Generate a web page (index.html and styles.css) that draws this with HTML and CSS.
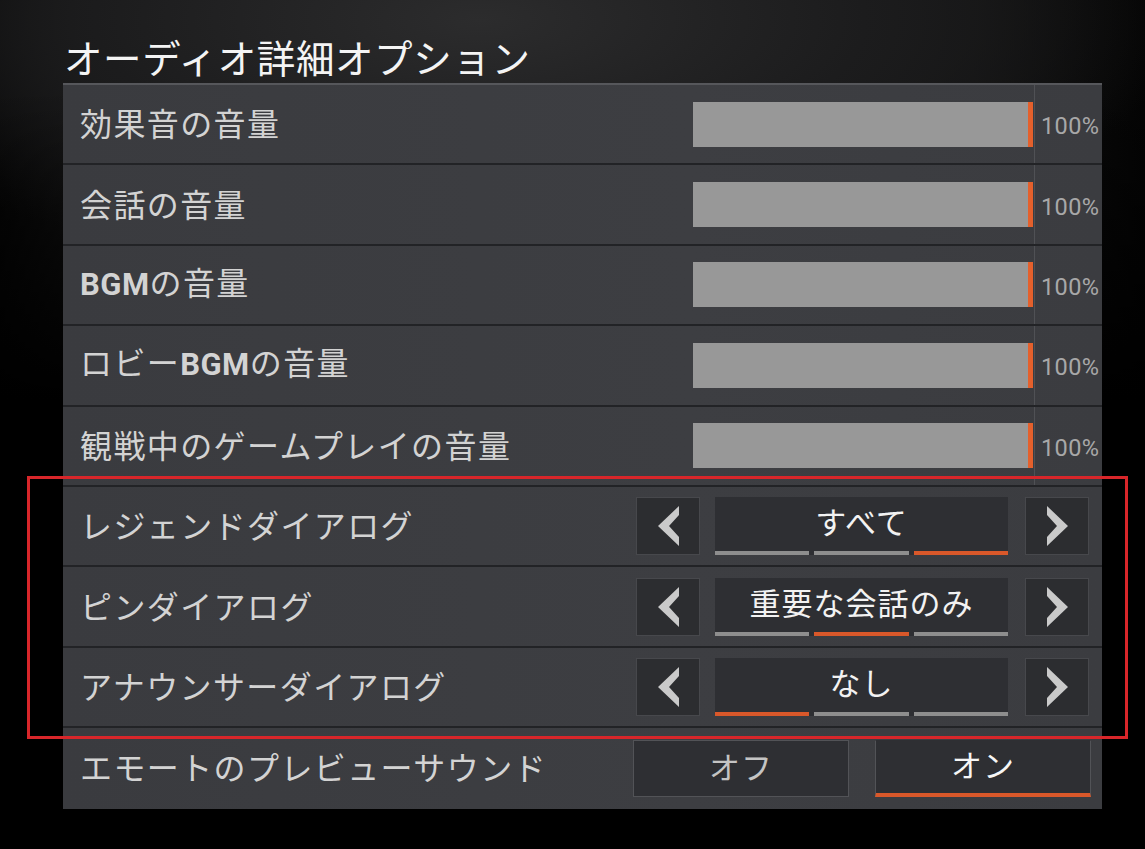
FILE: index.html
```html
<!DOCTYPE html>
<html lang="ja">
<head>
<meta charset="utf-8">
<title>オーディオ詳細オプション</title>
<link rel="stylesheet" href="styles.css">
</head>
<body>
<div class="page">
  <h1 class="title">オーディオ詳細オプション</h1>
  <div class="panel">
    <div class="row">
      <div class="label">効果音の音量</div>
      <div class="slider">
        <div class="track"><div class="fill"></div></div>
        <div class="vline"></div>
        <div class="pct">100%</div>
      </div>
    </div>
    <div class="row">
      <div class="label">会話の音量</div>
      <div class="slider">
        <div class="track"><div class="fill"></div></div>
        <div class="vline"></div>
        <div class="pct">100%</div>
      </div>
    </div>
    <div class="row">
      <div class="label"><span class="latin">BGM</span>の音量</div>
      <div class="slider">
        <div class="track"><div class="fill"></div></div>
        <div class="vline"></div>
        <div class="pct">100%</div>
      </div>
    </div>
    <div class="row">
      <div class="label">ロビー<span class="latin">BGM</span>の音量</div>
      <div class="slider">
        <div class="track"><div class="fill"></div></div>
        <div class="vline"></div>
        <div class="pct">100%</div>
      </div>
    </div>
    <div class="row">
      <div class="label">観戦中のゲームプレイの音量</div>
      <div class="slider">
        <div class="track"><div class="fill"></div></div>
        <div class="vline"></div>
        <div class="pct">100%</div>
      </div>
    </div>
    <div class="row">
      <div class="label">レジェンドダイアログ</div>
      <div class="selector">
        <div class="arrow"><svg width="21" height="40" viewBox="0 0 21 40"><polygon points="21,0 0,20 21,40 21,31 11,20 21,9"/></svg></div>
        <div class="value">
          <span class="value-text">すべて</span>
          <div class="segs"><i></i><i></i><i class="on"></i></div>
        </div>
        <div class="arrow"><svg width="21" height="40" viewBox="0 0 21 40"><polygon points="0,0 21,20 0,40 0,31 10,20 0,9"/></svg></div>
      </div>
    </div>
    <div class="row">
      <div class="label">ピンダイアログ</div>
      <div class="selector">
        <div class="arrow"><svg width="21" height="40" viewBox="0 0 21 40"><polygon points="21,0 0,20 21,40 21,31 11,20 21,9"/></svg></div>
        <div class="value">
          <span class="value-text">重要な会話のみ</span>
          <div class="segs"><i></i><i class="on"></i><i></i></div>
        </div>
        <div class="arrow"><svg width="21" height="40" viewBox="0 0 21 40"><polygon points="0,0 21,20 0,40 0,31 10,20 0,9"/></svg></div>
      </div>
    </div>
    <div class="row">
      <div class="label">アナウンサーダイアログ</div>
      <div class="selector">
        <div class="arrow"><svg width="21" height="40" viewBox="0 0 21 40"><polygon points="21,0 0,20 21,40 21,31 11,20 21,9"/></svg></div>
        <div class="value">
          <span class="value-text">なし</span>
          <div class="segs"><i class="on"></i><i></i><i></i></div>
        </div>
        <div class="arrow"><svg width="21" height="40" viewBox="0 0 21 40"><polygon points="0,0 21,20 0,40 0,31 10,20 0,9"/></svg></div>
      </div>
    </div>
    <div class="row last">
      <div class="label">エモートのプレビューサウンド</div>
      <div class="toggle">
        <div class="opt">オフ</div>
        <div class="opt active">オン</div>
      </div>
    </div>
  </div>
  <div class="highlight"></div>
</div>
</body>
</html>
```

FILE: styles.css
```css
* { box-sizing: border-box; }

html, body {
  margin: 0;
  padding: 0;
}

body {
  width: 1145px;
  height: 849px;
  overflow: hidden;
  background:
    radial-gradient(ellipse 700px 260px at 480px 20px, #2c2c2d 0%, #1c1c1d 55%, rgba(0,0,0,0) 100%),
    linear-gradient(to right, #050505 0%, #161616 10%, #1a1a1a 50%, #101010 85%, #040404 100%);
  background-color: #000;
  font-family: "Noto Sans CJK JP", "Noto Sans", sans-serif;
}

.page {
  position: relative;
  width: 1145px;
  height: 849px;
  padding: 34px 0 0 63px;
  background: linear-gradient(to bottom, rgba(0,0,0,0) 0px, rgba(0,0,0,0) 90px, #000 400px);
}

.title {
  margin: 0 0 5px 0;
  padding-left: 1px;
  font-size: 38.5px;
  line-height: 44px;
  font-weight: 400;
  color: #f4f4f4;
  letter-spacing: 0.6px;
}

.panel {
  width: 1039px;
  border-top: 2px solid #56575b;
  background: #3b3c40;
}

.row {
  height: 80.4px;
  display: flex;
  align-items: center;
  border-bottom: 2px solid #222326;
  background: linear-gradient(to right, #3a3b3f 0%, #3d3e42 60%, #3b3c40 100%);
}

.row.last {
  border-bottom: none;
}

.label {
  padding-left: 17px;
  font-size: 32px;
  line-height: 40px;
  color: #d3d3d3;
  letter-spacing: 1.4px;
  margin-top: -4px;
}

.latin {
  font-family: "Roboto", "Liberation Sans", sans-serif;
  font-weight: 700;
  font-size: 31px;
  letter-spacing: 0.5px;
}

/* slider rows */
.slider {
  margin-left: auto;
  display: flex;
  align-items: center;
  align-self: stretch;
}

.track {
  width: 340px;
  height: 45px;
  display: flex;
}

.fill {
  flex: 1;
  background: #989898;
  border-right: 5px solid #e4602c;
}

.vline {
  align-self: stretch;
  width: 1px;
  margin-left: 1px;
  background: #505155;
}

.pct {
  width: 67px;
  padding-left: 6px;
  font-family: "Roboto", "DejaVu Sans", sans-serif;
  font-size: 23.5px;
  letter-spacing: 0.4px;
  color: #a8a8a8;
  padding-top: 4px;
}

/* selector rows */
.selector {
  margin-left: auto;
  margin-right: 13px;
  display: flex;
  align-items: center;
  gap: 15px;
}

.selector .arrow + .value + .arrow { margin-left: 2px; }

.arrow {
  width: 64px;
  height: 58px;
  background: #2c2d30;
  border: 1px solid #47484c;
  display: flex;
  align-items: center;
  justify-content: center;
}

.arrow svg {
  fill: #cacaca;
}

.value {
  position: relative;
  width: 293px;
  height: 58px;
  background: #2e2f33;
  display: flex;
  flex-direction: column;
  align-items: center;
  justify-content: space-between;
}

.value-text {
  font-size: 31px;
  line-height: 42px;
  color: #f2f2f2;
  letter-spacing: 1px;
  margin-top: 3px;
}

.segs {
  width: 100%;
  display: flex;
  gap: 5px;
}

.segs i {
  flex: 1;
  height: 4px;
  background: #8e8e8e;
}

.segs i.on {
  background: #d9582a;
}

/* toggle row */
.toggle {
  margin-left: auto;
  margin-right: 11px;
  display: flex;
  gap: 26px;
}

.opt {
  width: 216px;
  height: 57px;
  background: #2e2f33;
  border: 1px solid #525357;
  display: flex;
  align-items: center;
  justify-content: center;
  font-size: 31px;
  color: #c4c4c4;
  letter-spacing: 1px;
  padding-bottom: 6px;
}

.opt.active {
  color: #f6f6f6;
  border-bottom: 4px solid #d9582a;
  border-top-color: #2e2f33;
}

/* red annotation frame */
.highlight {
  position: absolute;
  left: 27px;
  top: 476px;
  width: 1101px;
  height: 263px;
  border: 3px solid #d8262a;
  pointer-events: none;
}
```
